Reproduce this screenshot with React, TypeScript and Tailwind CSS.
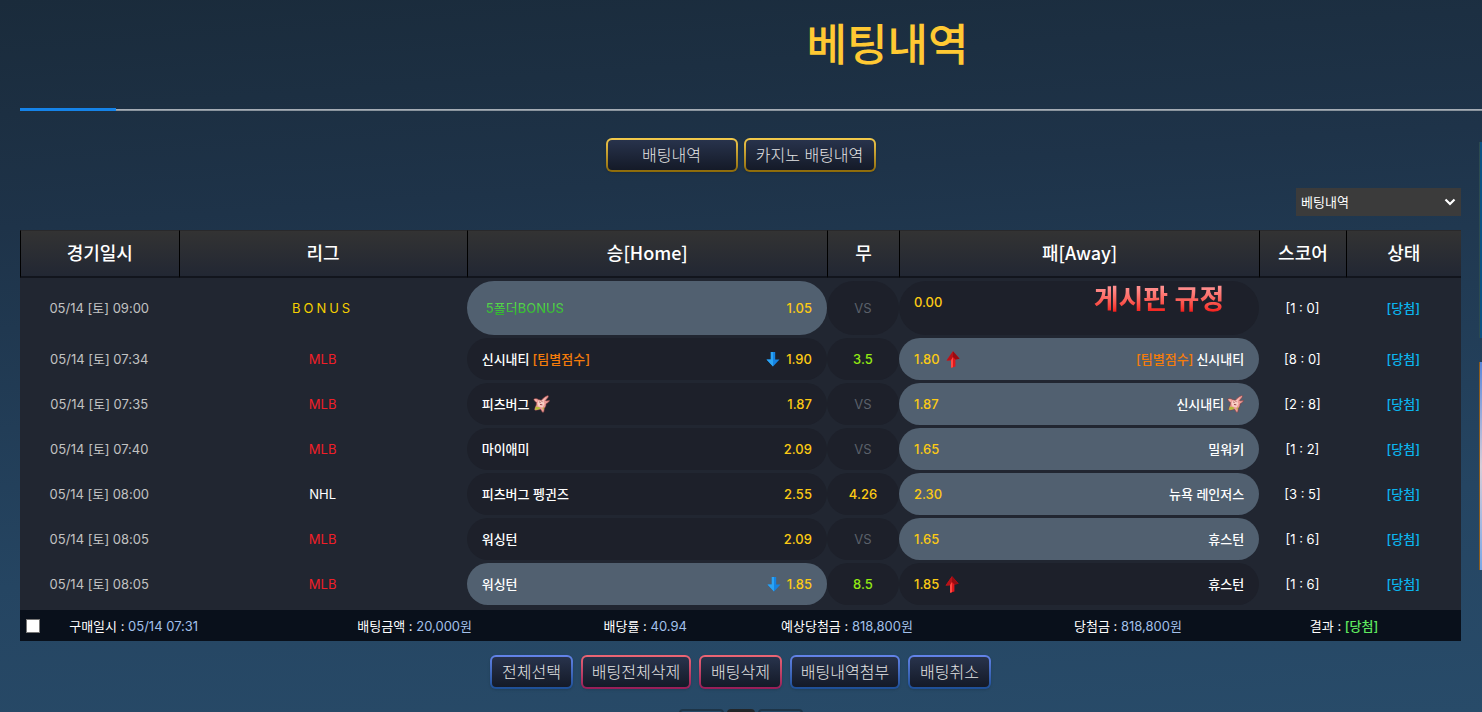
import React from 'react';

type Game = {
  date: string;
  league: string;
  leagueColor: string;
  home: string;
  homeOdds: string;
  draw: string;
  drawColor: string;
  away: string;
  awayOdds: string;
  score: string;
  pick: 'home' | 'away';
  special?: 'bonus' | 'total' | 'star';
  moved?: boolean;
};

const games: Game[] = [
  { date: '05/14 [토] 09:00', league: 'BONUS', leagueColor: 'text-[#f5cf00] tracking-[3px]', home: '5폴더BONUS', homeOdds: '1.05', draw: 'VS', drawColor: 'text-[#5b616b]', away: '게시판 규정', awayOdds: '0.00', score: '[1 : 0]', pick: 'home', special: 'bonus' },
  { date: '05/14 [토] 07:34', league: 'MLB', leagueColor: 'text-[#f01e28]', home: '신시내티', homeOdds: '1.90', draw: '3.5', drawColor: 'text-[#93ea12] font-medium', away: '신시내티', awayOdds: '1.80', score: '[8 : 0]', pick: 'away', special: 'total', moved: true },
  { date: '05/14 [토] 07:35', league: 'MLB', leagueColor: 'text-[#f01e28]', home: '피츠버그', homeOdds: '1.87', draw: 'VS', drawColor: 'text-[#5b616b]', away: '신시내티', awayOdds: '1.87', score: '[2 : 8]', pick: 'away', special: 'star' },
  { date: '05/14 [토] 07:40', league: 'MLB', leagueColor: 'text-[#f01e28]', home: '마이애미', homeOdds: '2.09', draw: 'VS', drawColor: 'text-[#5b616b]', away: '밀워키', awayOdds: '1.65', score: '[1 : 2]', pick: 'away' },
  { date: '05/14 [토] 08:00', league: 'NHL', leagueColor: 'text-white', home: '피츠버그 펭귄즈', homeOdds: '2.55', draw: '4.26', drawColor: 'text-[#fcca14] font-medium', away: '뉴욕 레인저스', awayOdds: '2.30', score: '[3 : 5]', pick: 'away' },
  { date: '05/14 [토] 08:05', league: 'MLB', leagueColor: 'text-[#f01e28]', home: '워싱턴', homeOdds: '2.09', draw: 'VS', drawColor: 'text-[#5b616b]', away: '휴스턴', awayOdds: '1.65', score: '[1 : 6]', pick: 'away' },
  { date: '05/14 [토] 08:05', league: 'MLB', leagueColor: 'text-[#f01e28]', home: '워싱턴', homeOdds: '1.85', draw: '8.5', drawColor: 'text-[#93ea12] font-medium', away: '휴스턴', awayOdds: '1.85', score: '[1 : 6]', pick: 'home', moved: true },
];

const columns = [
  { label: '경기일시', width: 'w-[11%]' },
  { label: '리그', width: 'w-[20%]' },
  { label: '승[Home]', width: 'w-[25%]' },
  { label: '무', width: 'w-[5%]' },
  { label: '패[Away]', width: 'w-[25%]' },
  { label: '스코어', width: 'w-[6%]' },
  { label: '상태', width: 'w-[8%]' },
];

const actions = [
  { label: '전체선택', frame: 'from-[#6484ea] to-[#1c4f96]', width: 'w-[83px]' },
  { label: '배팅전체삭제', frame: 'from-[#ee6674] to-[#961c58]', width: 'w-[110px]' },
  { label: '배팅삭제', frame: 'from-[#ee6674] to-[#961c58]', width: 'w-[83px]' },
  { label: '배팅내역첨부', frame: 'from-[#6484ea] to-[#1c4f96]', width: 'w-[110px]' },
  { label: '배팅취소', frame: 'from-[#6484ea] to-[#1c4f96]', width: 'w-[83px]' },
];

const DownArrow = () => (
  <svg width="14" height="15" viewBox="0 0 14 15" className="shrink-0" aria-hidden="true">
    <path d="M4.800 0h4.400v7.400h4.300L7 14.600.5 7.400h4.300z" fill="#1583e2" />
    <path d="M4.800 0H7v14.600L.5 7.400h4.300z" fill="#2ba4f4" />
  </svg>
);

const UpArrow = () => (
  <svg width="14" height="17" viewBox="0 0 14 17" className="shrink-0" aria-hidden="true">
    <path d="M7 .3l6.600 7.500-4.200.7v7L5 16.800V9.200l-4.400.2z" fill="#e2161c" />
    <path d="M7 .3l6.600 7.500-4.200.7L7 6z" fill="#980c12" />
    <path d="M7 .3V6L5 9.200l-4.400.2z" fill="#b81218" />
    <path d="M5 9.200L7 6v10.200l-2 .6z" fill="#ff4a42" />
  </svg>
);

// waving starfish used as the team mark
const StarIcon = () => (
  <svg width="17" height="18" viewBox="0 0 17 18" className="shrink-0" aria-hidden="true">
    <path
      d="M.8 4.200C2 3 3.800 3.200 5.500 4.500L8.300 5.200C10 3.500 12 1.300 14.800.6c.9.200.8 1.200.2 1.800L12.600 5.500c1 .5 2.600.2 3.900-.2.2 1.200-1.500 2.500-3.500 3.600.3 1.600-.4 3-1.500 4.200L10.800 17c-.8.7-1.600.2-1.900-.6L7.500 14.200 3 15.300c-1.300.1-1.900-.8-1.200-1.900L3.200 10 3.400 7.400C2 6.600.8 5.600.8 4.200z"
      fill="#ee9a96"
      stroke="#7c3b3c"
      strokeWidth=".6"
    />
    <path d="M5.500 5.400l3 .6L13.500 2 10.500 6l1 3-2 3.500-4-1-1-3z" fill="#f9cdc4" />
    <path d="M6.300 7l1.200.4M8.800 6.300l.8.800M7 9.500l2.300.3" stroke="#8c3236" strokeWidth=".9" />
    <path d="M2.600 11.500l4 .8.500 1.700-4.200 1.100c-.8 0-1-.7-.7-1.200zM9.300 13l1.900-.8-.6 2.800z" fill="#b4bb38" />
    <path d="M1.200 4.200l2 .3 1.300 1.900-1.400.2z" fill="#f7b7ae" />
  </svg>
);

const pill = 'flex items-center rounded-full px-[15px]';

const GameRow = ({ game }: { game: Game }) => {
  const bonus = game.special === 'bonus';
  const height = bonus ? 'h-[54px]' : 'h-[42px]';
  const homeBg = game.pick === 'home' ? 'bg-[#516070]' : 'bg-[#1d202a]';
  const awayBg = game.pick === 'away' ? 'bg-[#516070]' : 'bg-[#1d202a]';

  return (
    <tr>
      <td className="pt-[3px] text-center text-[#c2c2c2]">{game.date}</td>
      <td className={`pt-[3px] text-center ${game.leagueColor}`}>{game.league}</td>
      <td className="pt-[3px]">
        <div className={`${pill} ${height} ${homeBg} justify-between`}>
          {bonus ? (
            <span className="bg-gradient-to-b from-[#66e05c] to-[#1fae22] bg-clip-text pl-1 font-medium text-transparent">{game.home}</span>
          ) : (
            <span className="flex items-center gap-[3px] font-medium text-white">
              {game.home}
              {game.special === 'total' && <span className="text-[#f57c0a]">[팀별점수]</span>}
              {game.special === 'star' && <StarIcon />}
            </span>
          )}
          <span className="flex items-center gap-[6px] font-medium text-[#fcca14]">
            {game.moved && <DownArrow />}
            {game.homeOdds}
          </span>
        </div>
      </td>
      <td className="pt-[3px]">
        <div className={`${pill} ${height} ${game.drawColor} justify-center bg-[#1d202a]`}>{game.draw}</div>
      </td>
      <td className="pt-[3px]">
        <div className={`${pill} ${height} ${awayBg} justify-between`}>
          <span className={`flex items-center gap-[6px] font-medium text-[#fcca14] ${bonus ? 'pb-3' : ''}`}>
            {game.awayOdds}
            {game.moved && <UpArrow />}
          </span>
          {bonus ? (
            <span className="pr-5 pb-4">
              <span className="block bg-gradient-to-b from-[#ff9090] from-10% to-[#f4080e] to-90% bg-clip-text text-[27px] leading-8 font-bold text-transparent">
                {game.away}
              </span>
            </span>
          ) : (
            <span className="flex items-center gap-[3px] font-medium text-white">
              {game.special === 'total' && <span className="text-[#f57c0a]">[팀별점수]</span>}
              {game.away}
              {game.special === 'star' && <StarIcon />}
            </span>
          )}
        </div>
      </td>
      <td className="pt-[3px] text-center text-white">{game.score}</td>
      <td className="pt-[3px] text-center font-medium text-[#0bb4ee]">[당첨]</td>
    </tr>
  );
};

const Summary = ({ label, value, className }: { label: string; value: string; className: string }) => (
  <span className={`text-center whitespace-nowrap text-white ${className}`}>
    {label} : <span className="text-[#a3c0ea]">{value}</span>
  </span>
);

const FrameButton = ({ label, frame, width }: { label: string; frame: string; width: string }) => (
  <button type="button" className={`h-[34px] rounded-md bg-gradient-to-b p-[2px] shadow ${frame} ${width}`}>
    <span className="flex h-full items-center justify-center rounded-[4px] bg-gradient-to-b from-[#28334c] to-[#141a28] text-base font-light whitespace-nowrap text-[#e4e4e4]">
      {label}
    </span>
  </button>
);

const App: React.FC = () => {
  return (
    <div className="flex h-screen overflow-hidden bg-[linear-gradient(176deg,#1a2b3b_0%,#1e3349_28%,#254562_72%,#284b69_100%)] font-['Inter','Noto_Sans_CJK_KR',sans-serif] text-[13px] leading-5">
      <main className="min-w-0 flex-1 pl-5">
        <header className="flex h-[107px] items-start justify-center pt-[14px] pl-[276px]">
          <h1 className="font-['Noto_Sans_CJK_KR',sans-serif] text-[44px] leading-[56px] font-medium text-[#ffc933]">베팅내역</h1>
        </header>
        <div className="-mr-[3px] flex h-1 items-end">
          <div className="h-[3px] w-24 self-center bg-[#1583e8]" />
          <div className="h-[2px] flex-1 bg-gradient-to-b from-[#b4bac2] to-[#7c8791]" />
        </div>

        <div className="mr-[18px]">
          <nav className="mt-[27px] flex justify-center gap-[6px]">
            <FrameButton label="배팅내역" frame="from-[#f4cb4c] to-[#8c6a08]" width="w-[132px]" />
            <FrameButton label="카지노 배팅내역" frame="from-[#f4cb4c] to-[#8c6a08]" width="w-[132px]" />
          </nav>

          <div className="mt-4 flex justify-end">
            <div className="relative">
              <select aria-label="내역 종류" className="h-7 w-[165px] appearance-none bg-[#3b3b3b] pl-[5px] text-white">
                <option>베팅내역</option>
              </select>
              <svg width="12" height="8" viewBox="0 0 12 8" className="pointer-events-none absolute top-[10px] right-[5px]" aria-hidden="true">
                <path d="M1.500 1.500L6 6l4.500-4.500" fill="none" stroke="#fff" strokeWidth="2.200" />
              </svg>
            </div>
          </div>

          <section className="mt-[14px] bg-[#212631] pb-[5px]">
            <table className="w-full table-fixed border-separate border-spacing-0">
              <thead>
                <tr>
                  {columns.map((col) => (
                    <th
                      key={col.label}
                      className={`${col.width} h-12 border-t border-b-2 border-l border-t-[#29292b] border-b-[#12151d] border-l-black bg-gradient-to-b from-[#333333] to-[#222733] p-0 pb-1 font-['Noto_Sans_CJK_KR',sans-serif] text-lg font-medium text-white`}
                    >
                      {col.label}
                    </th>
                  ))}
                </tr>
              </thead>
              <tbody className="[&_td]:px-0">
                {games.map((game, i) => (
                  <GameRow key={i} game={game} />
                ))}
              </tbody>
            </table>
          </section>

          <section className="flex h-[31px] items-center bg-[#09101b]">
            <input type="checkbox" aria-label="내역 선택" className="ml-[6px] size-[14px] shrink-0 appearance-none border border-[#767676] bg-white checked:bg-sky-500" />
            <Summary label="구매일시" value="05/14 07:31" className="w-[13%]" />
            <Summary label="배팅금액" value="20,000원" className="w-[26%]" />
            <Summary label="배당률" value="40.94" className="w-[6%]" />
            <Summary label="예상당첨금" value="818,800원" className="w-[22%]" />
            <Summary label="당첨금" value="818,800원" className="w-[17%]" />
            <span className="w-[13%] text-center text-white">
              결과 : <span className="font-medium text-[#5fe85f]">[당첨]</span>
            </span>
          </section>

          <div className="mt-[14px] flex justify-center gap-[8px]">
            {actions.map((action) => (
              <FrameButton key={action.label} {...action} />
            ))}
          </div>

          <nav aria-label="페이지" className="mt-[20px] flex justify-center gap-[3px]">
            <button type="button" aria-label="이전" className="h-8 w-[45px] rounded border-2 border-[#1d3447]" />
            <button type="button" aria-label="1" className="h-8 w-7 rounded bg-[#222629]" />
            <button type="button" aria-label="다음" className="h-8 w-[45px] rounded border-2 border-[#1d3447]" />
          </nav>
        </div>
      </main>

      {/* side banners, only their left edge shows */}
      <aside className="w-[3px] shrink-0 pt-[142px]">
        <div className="h-[196px] border-l border-[#2b4a50] bg-[#0c5182]" />
        <div className="mt-6 h-[208px] border-l border-[#8a5c1c] bg-gradient-to-b from-[#5a86d8] via-[#d8ccd8] to-[#7aa6e4]" />
      </aside>
    </div>
  );
};

export default App;
